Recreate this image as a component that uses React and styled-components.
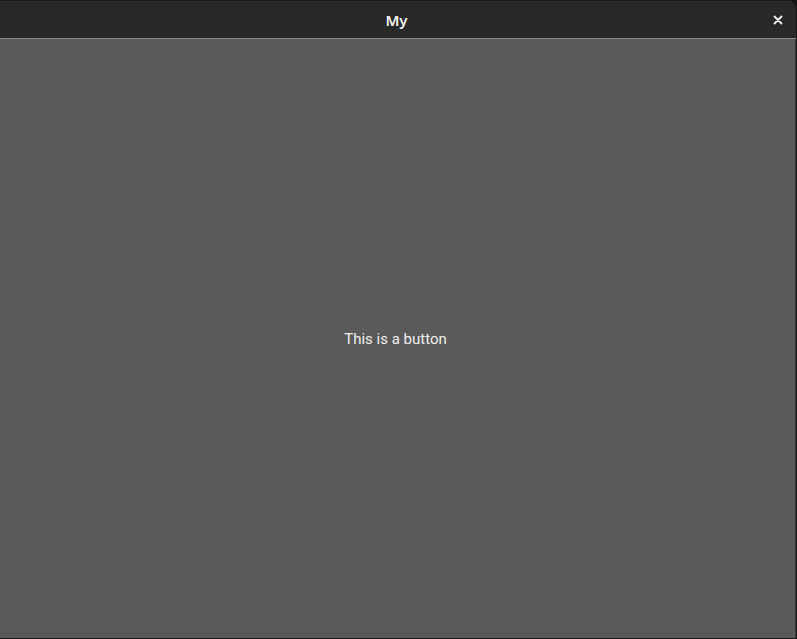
import React from 'react';
import styled, { createGlobalStyle } from 'styled-components';

const GlobalStyle = createGlobalStyle`
    html, body {
        margin: 0;
        padding: 0;
        width: 797px;
        height: 639px;
        overflow: hidden;
        background: #161616;
    }
    * { box-sizing: border-box; }
`

const Window = styled.div`
    width: 796px;
    height: 637px;
    margin-top: 1px;
    display: flex;
    flex-direction: column;
    border-radius: 0 8px 0 0;
    overflow: hidden;
    font-family: "Noto Sans", "Open Sans", sans-serif;
`

const TitleBar = styled.div`
    height: 38px;
    flex: none;
    display: grid;
    grid-template-columns: 1fr auto 1fr;
    align-items: center;
    background: #282828;
    border-top: 1px solid #333;
    border-bottom: 1px solid #8a8a8a;
    color: #f2f2f2;
`

const Title = styled.span`
    grid-column: 2;
    font-size: 15px;
    font-weight: 600;
    margin-right: 3px;
`

const CloseButton = styled.button`
    grid-column: 3;
    justify-self: end;
    margin-right: 10px;
    width: 16px;
    height: 16px;
    padding: 0;
    border: none;
    background: none;
    display: flex;
    align-items: center;
    justify-content: center;
    color: #f2f2f2;
`

const Content = styled.div`
    flex: 1;
    display: flex;
    align-items: center;
    justify-content: center;
    background: #595959;
    border-right: 1px solid #3c3c3c;
`

const Label = styled.span`
    font-family: Roboto, "Liberation Sans", sans-serif;
    font-size: 15px;
    color: #f0f0f0;
    margin-left: -4px;
    margin-top: 0px;
`

export default function App() {
    return (
        <>
            <GlobalStyle />
            <Window>
                <TitleBar>
                    <Title>My</Title>
                    <CloseButton>
                        <svg width="10" height="10" viewBox="0 0 10 10">
                            <path d="M1.5 1.5 L8.5 8.5 M8.5 1.5 L1.5 8.5" stroke="currentColor" strokeWidth="1.8" strokeLinecap="round" />
                        </svg>
                    </CloseButton>
                </TitleBar>
                <Content>
                    <Label>This is a button</Label>
                </Content>
            </Window>
        </>
    )
}
